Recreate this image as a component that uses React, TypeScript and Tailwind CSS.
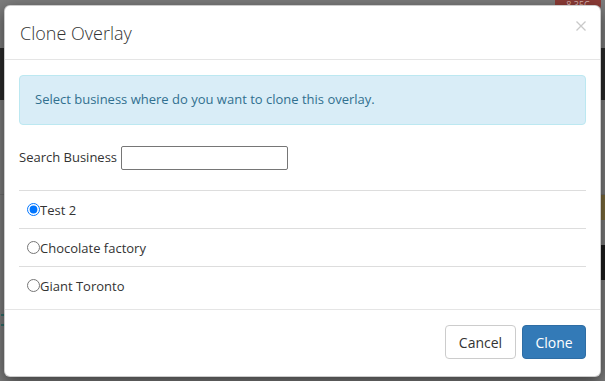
import React, { useState } from 'react';

const businesses = ['Test 2', 'Chocolate factory', 'Giant Toronto'];

export default function App() {
  const [selected, setSelected] = useState('Test 2');
  const [query, setQuery] = useState('');

  return (
    <div className="relative w-[605px] h-[381px] overflow-hidden bg-[#7c7c7c]" style={{ fontFamily: '"Open Sans", "Noto Sans", sans-serif' }}>
      {/* dimmed page behind the modal */}
      <div className="flex flex-col">
        <div className="h-[48px] flex justify-end pr-[4px]">
          <div className="w-[46px] h-[9px] rounded-b-[4px] bg-[#8c3b36] text-[9px] leading-[9px] text-[#d9b3b0] text-center overflow-hidden">8,35C</div>
        </div>
        <div className="h-[52px] bg-[#2b2b2b]"></div>
        <div className="h-[95px] border-b border-[#6f6f6f]"></div>
        <div className="h-[25px] flex justify-end">
          <div className="w-[8px] bg-[#7b6a3c]"></div>
        </div>
        <div className="h-[25px]"></div>
        <div className="h-[35px] flex justify-end">
          <div className="w-[8px] bg-[#1d1d1d]"></div>
        </div>
        <div className="h-[60px] flex items-end pl-[1px] pb-[14px]">
          <div className="w-[3px] h-[12px] border-y-2 border-[#2f6f6a]"></div>
        </div>
      </div>

      {/* modal */}
      <div className="absolute left-[4px] top-[5px] w-[597px] h-[372px] bg-white rounded-[6px] border border-black/20 shadow-[0_5px_15px_rgba(0,0,0,0.5)] flex flex-col text-[#333]">
        <div className="h-[54px] shrink-0 border-b border-[#e5e5e5] flex items-center justify-between pl-[15px] pr-[14px]">
          <h4 className="text-[18px] leading-[26px] font-light text-[#333]">Clone Overlay</h4>
          <button className="self-start mt-[15px] w-[10px] h-[10px] text-[#c9c9c9]" aria-label="Close">
            <svg viewBox="0 0 10 10" width="10" height="10" fill="none" stroke="currentColor" strokeWidth="1.3">
              <path d="M0.5 0.5L9.5 9.5M9.5 0.5L0.5 9.5" />
            </svg>
          </button>
        </div>

        <div className="flex-1 px-[14px] pt-[15px]">
          <div className="h-[50px] rounded-[4px] border border-[#bce8f1] bg-[#d9edf7] text-[#31708f] text-[13px] flex items-center px-[15px]">
            Select business where do you want to clone this overlay.
          </div>

          <div className="mt-[21px] flex items-center gap-[4px] text-[13px]">
            <label htmlFor="search">Search Business</label>
            <input
              id="search"
              value={query}
              onChange={e => setQuery(e.target.value)}
              className="w-[167px] h-[24px] border border-[#767676] rounded-[2px] px-[3px] text-[13px] outline-none"
            />
          </div>

          <div className="mt-[20px]">
            {businesses
              .filter(b => b.toLowerCase().includes(query.toLowerCase()))
              .map(b => (
                <label key={b} className="h-[38px] border-t border-[#dddddd] flex items-center pl-[8px] pt-[2px] text-[13px] text-[#333]">
                  <input
                    type="radio"
                    name="business"
                    checked={selected === b}
                    onChange={() => setSelected(b)}
                    className="w-[13px] h-[13px] m-0 -mt-[2px] accent-[#0075ff]"
                  />
                  <span>{b}</span>
                </label>
              ))}
          </div>
        </div>

        <div className="h-[67px] shrink-0 border-t border-[#e5e5e5] flex justify-end items-start gap-[6px] pt-[15px] pr-[14px]">
          <button className="h-[34px] w-[71px] rounded-[4px] border border-[#cccccc] bg-white text-[14px] text-[#333]">Cancel</button>
          <button className="h-[34px] w-[64px] rounded-[4px] border border-[#2e6da4] bg-[#337ab7] text-[14px] text-white">Clone</button>
        </div>
      </div>
    </div>
  );
}
